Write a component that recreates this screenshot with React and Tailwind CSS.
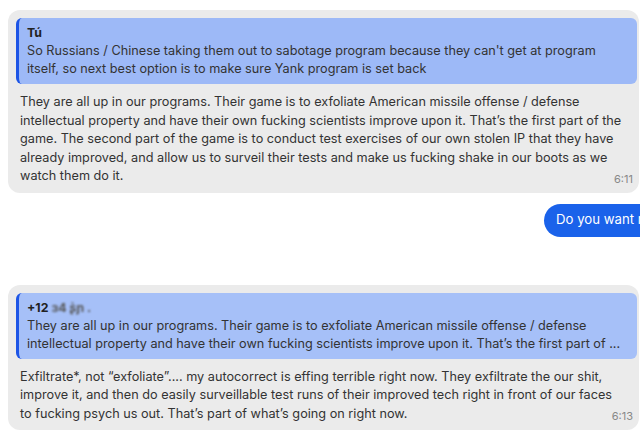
import React from "react";

const font = { fontFamily: "Inter, 'Noto Sans', sans-serif" };

function Received({ name, nameBlur, quote, quoteClamp, quoteBg, body, time, mt }) {
  return (
    <div className={`relative ml-2 w-[631px] rounded-[12px] bg-[#ebebeb] pt-2 pb-[7px] ${mt}`}>
      <div className={`mr-[2px] ml-2 rounded-[6px] border-l-[3px] border-[#1d55e6] ${quoteBg} py-[6px] pr-2 pl-2`}>
        <div className="text-[12.3px] leading-[18px] font-bold text-[#222]">
          {name}
          {nameBlur && <span className="ml-[3px] inline-block blur-[0.8px] text-[#555]">{nameBlur}</span>}
        </div>
        <div className={`text-[12.7px] leading-[18px] text-[#333] ${quoteClamp ? "line-clamp-2" : ""}`}>{quote}</div>
      </div>
      <div className="mt-[9px] pr-[6px] pl-3 text-[12.7px] leading-[18.5px] text-[#333]">{body}</div>
      <div className="absolute right-[6px] bottom-[7px] text-[11px] leading-[14px] text-[#888]">{time}</div>
    </div>
  );
}

export default function App() {
  return (
    <div className="h-[435px] w-[640px] overflow-hidden bg-white pt-[10px]" style={font}>
      <Received
        name="Tú"
        quoteBg="bg-[#9db9f7]"
        quote="So Russians / Chinese taking them out to sabotage program because they can't get at program itself, so next best option is to make sure Yank program is set back"
        body="They are all up in our programs. Their game is to exfoliate American missile offense / defense intellectual property and have their own fucking scientists improve upon it. That’s the first part of the game. The second part of the game is to conduct test exercises of our own stolen IP that they have already improved, and allow us to surveil their tests and make us fucking shake in our boots as we watch them do it."
        time="6:11"
      />
      <div className="mt-[11px] flex">
        <div className="ml-[544px] flex h-[33px] w-[200px] shrink-0 items-center rounded-full bg-[#1a62ea] pl-3 text-[13.2px] whitespace-nowrap text-white">
          Do you want me to
        </div>
      </div>
      <Received
        mt="mt-[48px]"
        name="+12"
        nameBlur="ɜ4 ʂ̀ɲ ."
        quoteBg="bg-[#a6c0f8]"
        quoteClamp
        quote="They are all up in our programs. Their game is to exfoliate American missile offense / defense intellectual property and have their own fucking scientists improve upon it. That’s the first part of ..."
        body={
          <>
            Exfiltrate*, not “exfoliate”.... my autocorrect is effing terrible right now. They exfiltrate the our shit,
            improve it, and then do easily surveillable test runs of their improved tech right in front of our faces
            <br />
            to fucking psych us out. That’s part of what’s going on right now.
          </>
        }
        time="6:13"
      />
    </div>
  );
}
